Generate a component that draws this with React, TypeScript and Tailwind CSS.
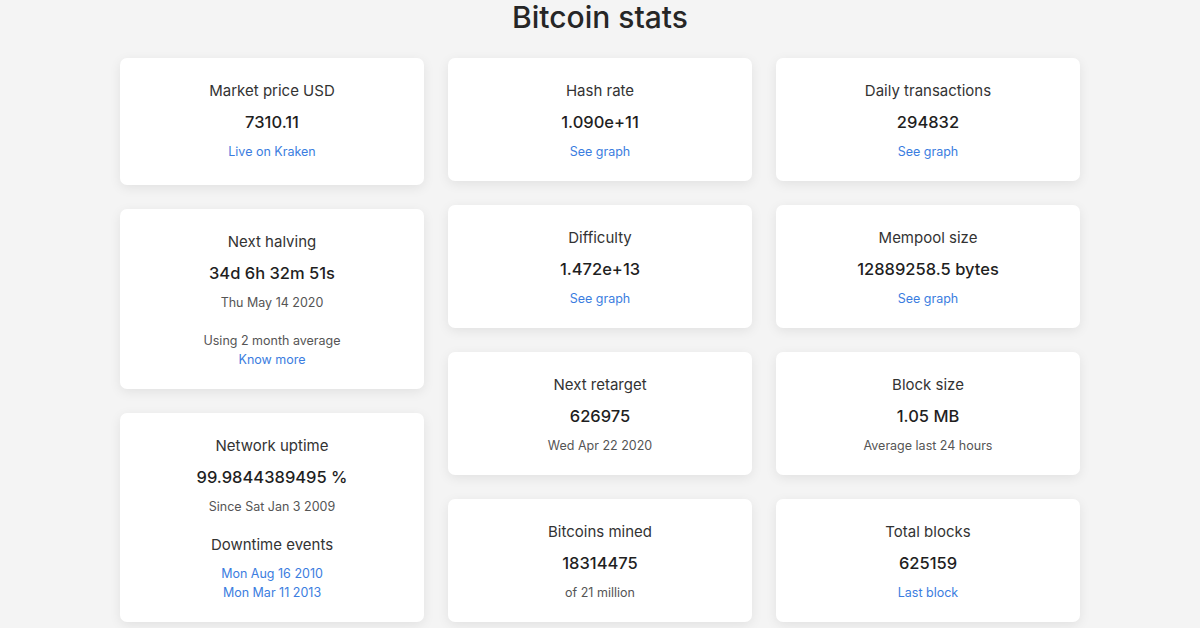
import React from 'react';

type Stat = {
  title: string;
  value: string;
  children?: React.ReactNode;
  pb?: string;
};

function Card({ title, value, children, pb = 'pb-[19px]' }: Stat) {
  return (
    <div
      className={`bg-white rounded-[7px] shadow-[0_3px_12px_rgba(0,0,0,0.08)] text-center pt-[23px] ${pb}`}
    >
      <h2 className="text-[15px] leading-[20px] text-[#333]">{title}</h2>
      <p className="mt-[9px] text-[16.5px] leading-[24px] font-medium text-[#1f1f1f]">{value}</p>
      {children}
    </div>
  );
}

function Link({ children }: { children: React.ReactNode }) {
  return (
    <a href="#" className="block text-[12.5px] leading-[20px] text-[#3b7de0] mt-[8px]">
      {children}
    </a>
  );
}

function Note({ children }: { children: React.ReactNode }) {
  return <p className="text-[12.5px] leading-[20px] text-[#555] mt-[8px]">{children}</p>;
}

export default function App() {
  return (
    <div
      className="min-h-[628px] bg-[#f4f4f4] overflow-hidden"
      style={{ fontFamily: 'Inter, "Noto Sans", sans-serif' }}
    >
      <h1 className="text-center text-[30px] leading-[36px] font-medium text-[#262626] -mt-[1px]">
        Bitcoin stats
      </h1>

      <div className="mt-[23px] mx-auto w-[960px] grid grid-cols-3 gap-x-[24px] items-start">
        {/* Column 1 */}
        <div className="flex flex-col gap-[24px]">
          <Card title="Market price USD" value="7310.11" pb="pb-[23px]">
            <Link>Live on Kraken</Link>
          </Card>
          <Card title="Next halving" value="34d 6h 32m 51s" pb="pb-[20px]">
            <Note>Thu May 14 2020</Note>
            <p className="mt-[18px] text-[12.5px] leading-[19px] text-[#555]">Using 2 month average</p>
            <a href="#" className="block text-[12.5px] leading-[19px] text-[#3b7de0]">
              Know more
            </a>
          </Card>
          <Card title="Network uptime" value="99.9844389495 %" pb="pb-[20px]">
            <Note>Since Sat Jan 3 2009</Note>
            <h3 className="mt-[18px] text-[15px] leading-[20px] text-[#333]">Downtime events</h3>
            <div className="mt-[9px]">
              <a href="#" className="block text-[12.5px] leading-[19px] text-[#3b7de0]">
                Mon Aug 16 2010
              </a>
              <a href="#" className="block text-[12.5px] leading-[19px] text-[#3b7de0]">
                Mon Mar 11 2013
              </a>
            </div>
          </Card>
        </div>

        {/* Column 2 */}
        <div className="flex flex-col gap-[24px]">
          <Card title="Hash rate" value="1.090e+11">
            <Link>See graph</Link>
          </Card>
          <Card title="Difficulty" value="1.472e+13">
            <Link>See graph</Link>
          </Card>
          <Card title="Next retarget" value="626975">
            <Note>Wed Apr 22 2020</Note>
          </Card>
          <Card title="Bitcoins mined" value="18314475">
            <Note>of 21 million</Note>
          </Card>
        </div>

        {/* Column 3 */}
        <div className="flex flex-col gap-[24px]">
          <Card title="Daily transactions" value="294832">
            <Link>See graph</Link>
          </Card>
          <Card title="Mempool size" value="12889258.5 bytes">
            <Link>See graph</Link>
          </Card>
          <Card title="Block size" value="1.05 MB">
            <Note>Average last 24 hours</Note>
          </Card>
          <Card title="Total blocks" value="625159">
            <Link>Last block</Link>
          </Card>
        </div>
      </div>
    </div>
  );
}
